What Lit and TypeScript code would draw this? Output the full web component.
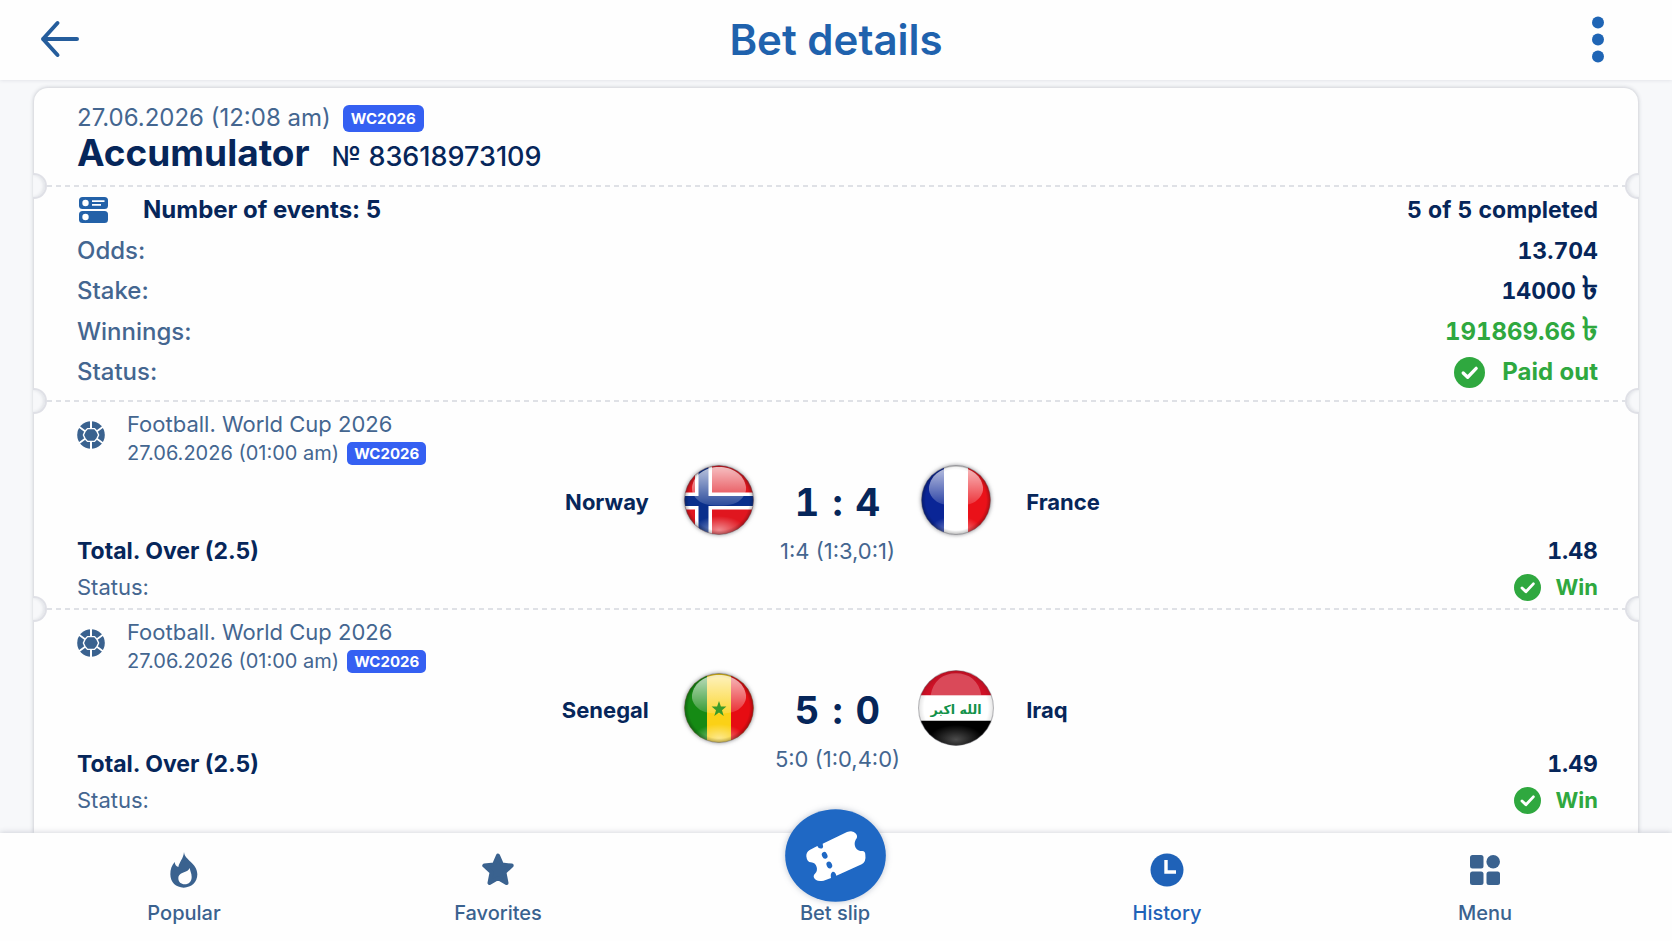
import { LitElement, html, svg, css, nothing, type TemplateResult, type SVGTemplateResult } from "lit";
import { customElement, property } from "lit/decorators.js";

type Country = "norway" | "france" | "senegal" | "iraq";

interface BetEvent {
  league: string;
  date: string;
  home: string;
  homeFlag: Country;
  homeGoals: number;
  away: string;
  awayFlag: Country;
  awayGoals: number;
  periods: string;
  market: string;
  odds: string;
  result: string;
}

const events: BetEvent[] = [
  {
    league: "Football. World Cup 2026", date: "27.06.2026 (01:00 am)",
    home: "Norway", homeFlag: "norway", homeGoals: 1, away: "France", awayFlag: "france", awayGoals: 4,
    periods: "1:4 (1:3,0:1)", market: "Total. Over (2.5)", odds: "1.48", result: "Win",
  },
  {
    league: "Football. World Cup 2026", date: "27.06.2026 (01:00 am)",
    home: "Senegal", homeFlag: "senegal", homeGoals: 5, away: "Iraq", awayFlag: "iraq", awayGoals: 0,
    periods: "5:0 (1:0,4:0)", market: "Total. Over (2.5)", odds: "1.49", result: "Win",
  },
];

const check = html`<svg class="check" viewBox="0 0 32 32" aria-hidden="true">
  <circle cx="16" cy="16" r="16" fill="#2fa83f" />
  <path d="M9.5 16.5l4.6 4.4 8.8-9.2" fill="none" stroke="#fff" stroke-width="3.4" stroke-linecap="round" stroke-linejoin="round" />
</svg>`;

const ball = html`<svg class="ball" viewBox="0 0 28 28" aria-hidden="true">
  <circle cx="14" cy="14" r="13.800" fill="#3a628f" />
  <g fill="none" stroke="#fff" stroke-width="1.400">
    <path d="M10.500 7.600h7l2.400 2.600 1.700 3.800-1.700 3.800-2.400 2.600h-7l-2.400-2.600L6.400 14l1.700-3.800z" />
    <path d="M14 0v7.600M14 20.400V28" stroke-width="2" />
    <path d="M8.100 10.200L2 5.800M8.100 17.800L2 22.200M19.900 10.200L26 5.800M19.900 17.800l6.100 4.400" stroke-width="1.800" />
  </g>
</svg>`;

const flagArt: Record<Country, SVGTemplateResult> = {
  norway: svg`<rect width="72" height="72" fill="#e0161f" />
    <path d="M20.500 0v72M0 37h72" stroke="#fff" stroke-width="17" />
    <path d="M20.500 0v72M0 37h72" stroke="#0a2f8c" stroke-width="10" />`,
  france: svg`<rect width="72" height="72" fill="#fff" />
    <path d="M0 0h24v72H0z" fill="#0a2596" /><path d="M48 0h24v72H48z" fill="#ea1119" />`,
  senegal: svg`<rect width="72" height="72" fill="#fbd116" />
    <path d="M0 0h24v72H0z" fill="#158a14" /><path d="M48 0h24v72H48z" fill="#e60c12" />`,
  iraq: svg`<rect width="72" height="72" fill="#fff" />
    <path d="M0 0h72v24H0z" fill="#cf1126" /><path d="M0 48h72v24H0z" fill="#000" />
    <text x="36" y="42" text-anchor="middle" font-family="DejaVu Sans, Noto Sans, sans-serif" font-weight="700" font-size="12" fill="#12914a">الله اكبر</text>`,
};

@customElement("team-flag")
export class TeamFlag extends LitElement {
  @property() country: Country = "norway";

  static styles = css`
    :host { display: block; }
    .disc { display: block; width: 72px; height: 72px; overflow: visible; filter: drop-shadow(0 0 2px rgba(40, 40, 50, 0.55)); }
    .large { width: 76px; height: 76px; margin: -2px; filter: none; }
  `;

  render() {
    const plain = this.country === "iraq";
    return html`<svg class="disc ${plain ? "large" : ""}" viewBox="0 0 72 72" role="img" aria-label="${this.country}">
      <defs>
        <clipPath id="round"><circle cx="36" cy="36" r=${plain ? 35.5 : 34.5} /></clipPath>
        <linearGradient id="gloss" x1="0" y1="0" x2="0" y2="1">
          <stop offset="0" stop-color="#fff" stop-opacity="0.72" />
          <stop offset="1" stop-color="#fff" stop-opacity="0.14" />
        </linearGradient>
        <radialGradient id="glow" cx="0.5" cy="0.5" r="0.5">
          <stop offset="0" stop-color="#fff" stop-opacity=${plain ? 0.3 : 0.5} />
          <stop offset="1" stop-color="#fff" stop-opacity="0" />
        </radialGradient>
        <radialGradient id="edge" cx="0.5" cy="0.5" r="0.5">
          <stop offset="0.84" stop-color="#000" stop-opacity="0" />
          <stop offset="1" stop-color="#000" stop-opacity=${plain ? 0.12 : 0.36} />
        </radialGradient>
      </defs>
      <g clip-path="url(#round)">
        ${flagArt[this.country]}
        <ellipse cx="36" cy="66" rx="26" ry="14" fill="url(#glow)" />
        <circle cx="36" cy="36" r="36" fill="url(#edge)" />
        ${plain
          ? svg`<path d="M12 24C14 10 24 3 36 3s22 7 24 21z" fill="#fff" opacity="0.24" />`
          : svg`<path d="M9 23C11 10 23 3 36 3s25 7 27 20c1 8-6 15-13 17-9 2-19 2-28 0C15 38 8 31 9 23z" fill="url(#gloss)" />`}
        ${this.country === "senegal"
          ? svg`<path d="M36 29l1.900 5.600h5.500l-4.400 3.600 1.700 5.700-4.700-3.500-4.700 3.500 1.700-5.700-4.400-3.600h5.500z" fill="#3a9a2a" />`
          : nothing}
      </g>
      <circle cx="36" cy="36" r=${plain ? 35.5 : 34.5} fill="none" stroke="#55565c" stroke-opacity="0.4" />
    </svg>`;
  }
}

@customElement("event-section")
export class EventSection extends LitElement {
  @property({ attribute: false }) event!: BetEvent;

  static styles = css`
    :host { display: block; }
    .event { box-sizing: border-box; display: grid; grid-template-columns: minmax(0, 1fr) auto minmax(0, 1fr); height: 100%; padding: 8px 40px 3px 43px; }
    .side { display: flex; flex-direction: column; justify-content: space-between; }
    .right { justify-content: flex-end; align-items: flex-end; }
    .head { display: flex; align-items: flex-start; gap: 22px; }
    .ball { width: 28px; height: 28px; flex: none; margin-top: 11px; }
    .league { font-size: 22px; line-height: 28px; color: #446690; }
    .date { display: flex; align-items: center; gap: 8px; font-size: 20px; line-height: 30px; color: #446690; white-space: nowrap; }
    .badge { padding: 0 7px; border-radius: 5px; background: #3560f2; color: #fff; font-size: 15px; line-height: 23px; font-weight: 700; }
    .strong { font-size: 23px; line-height: 36px; font-weight: 700; color: #06265a; }
    .odds { font-variant-numeric: tabular-nums; }
    .label { font-size: 22px; line-height: 36px; color: #446690; }
    .won { display: flex; align-items: center; gap: 15px; font-size: 22px; line-height: 36px; font-weight: 700; color: #2fa83f; }
    .check { width: 27px; height: 27px; }
    .match { display: grid; grid-template-columns: 1fr auto auto auto 1fr; align-items: center; align-content: start; column-gap: 34px; padding-top: 54px; }
    .team { padding-top: 4px; font-size: 22px; font-weight: 700; color: #06265a; line-height: 68px; }
    .home { text-align: right; }
    .score { display: flex; gap: 13px; padding: 4px 6px 0; font-size: 38px; line-height: 68px; font-weight: 700; font-variant-numeric: tabular-nums; color: #06265a; }
    .periods { grid-column: 1 / -1; text-align: center; font-size: 22px; line-height: 30px; color: #446690; }
  `;

  render() {
    const e = this.event;
    return html`<article class="event">
      <div class="side">
        <div class="head">
          ${ball}
          <div>
            <div class="league">${e.league}</div>
            <div class="date">${e.date} <span class="badge">WC2026</span></div>
          </div>
        </div>
        <div>
          <div class="strong">${e.market}</div>
          <div class="label">Status:</div>
        </div>
      </div>
      <div class="match">
        <span class="team home">${e.home}</span>
        <team-flag country=${e.homeFlag}></team-flag>
        <span class="score"><span>${e.homeGoals}</span> <span>:</span> <span>${e.awayGoals}</span></span>
        <team-flag country=${e.awayFlag}></team-flag>
        <span class="team">${e.away}</span>
        <span class="periods">${e.periods}</span>
      </div>
      <div class="side right">
        <div class="strong odds">${e.odds}</div>
        <div class="won">${check}${e.result}</div>
      </div>
    </article>`;
  }
}

interface Tab { label: string; icon: TemplateResult; active?: boolean; raised?: boolean; }

const tabs: Tab[] = [
  {
    label: "Popular",
    icon: html`<svg class="icon" viewBox="80 45 108 108" aria-hidden="true"><path fill="currentColor" fill-rule="evenodd" d="M134 45C136 70 174 78 174 112C174 136 156 152 133 152C110 152 93 136 93 112C93 97 97 85 106 75C107 83 110 88 117 90C120 74 132 66 134 45ZM151 93C148 100 142 103 134 106C124 109 117 114 117 124C117 135 125 142 136 142C149 142 157 133 157 120C157 108 152 102 151 93Z" /></svg>`,
  },
  {
    label: "Favorites",
    icon: html`<svg class="icon" viewBox="0 0 36 36" aria-hidden="true"><path fill="currentColor" stroke="currentColor" stroke-width="4" stroke-linejoin="round" d="M18 3.500l3.900 9 9.800 1.100-7.300 6.600 2.100 10.800L18 26l-8.500 5 2.100-10.800-7.300-6.600 9.800-1.100z" /></svg>`,
  },
  {
    label: "Bet slip", raised: true,
    icon: html`<svg class="slip" viewBox="36 36 303 279" aria-hidden="true">
      <ellipse cx="187.500" cy="175.500" rx="151" ry="139" fill="#1f68c4" />
      <path fill="#fff" d="M100 178Q99 166 110 159L133 147Q137 157 148 154Q152 150 149 140L222 105Q240 98 249 110Q256 119 248 128Q242 140 248 152Q254 162 268 162Q277 162 277 174Q280 194 266 202L190 236Q187 223 179 224Q171 228 174 243L152 251Q128 256 122 240Q121 234 127 229Q134 221 131 210Q127 197 114 196Q102 196 100 178Z" />
      <g fill="#1f68c4"><ellipse cx="155" cy="175" rx="8" ry="10.500" transform="rotate(-26 155 175)" /><ellipse cx="169" cy="204" rx="8" ry="10.500" transform="rotate(-26 169 204)" /></g>
    </svg>`,
  },
  {
    label: "History", active: true,
    icon: html`<svg class="icon" viewBox="0 0 36 36" aria-hidden="true"><circle cx="18" cy="18" r="16.500" fill="currentColor" /><path d="M17 8v12h10" fill="none" stroke="#fff" stroke-width="3.400" /></svg>`,
  },
  {
    label: "Menu",
    icon: html`<svg class="icon" viewBox="0 0 36 36" aria-hidden="true"><g fill="currentColor"><rect x="3" y="3" width="13.500" height="13.500" rx="2.500" /><circle cx="26.200" cy="9.800" r="6.800" /><rect x="3" y="19.500" width="13.500" height="13.500" rx="2.500" /><rect x="19.500" y="19.500" width="13.500" height="13.500" rx="2.500" /></g></svg>`,
  },
];

@customElement("app-root")
export class AppRoot extends LitElement {
  static styles = css`
    :host { display: flex; flex-direction: column; height: 100vh; overflow: hidden; background: #f7f8fa; font-family: Inter, "Noto Sans", sans-serif; color: #06265a; }
    .topbar { position: relative; flex: none; box-sizing: border-box; height: 80px; display: grid; grid-template-columns: 1fr auto 1fr; align-items: center; padding: 0 36px; background: #fefefe; box-shadow: 0 0 4px rgba(40, 50, 80, 0.14); }
    .tool { display: block; padding: 0; border: 0; background: none; cursor: pointer; }
    .back { width: 44px; height: 44px; }
    .more { justify-self: end; width: 22px; height: 48px; margin-right: 27px; }
    .tool svg { display: block; width: 100%; height: 100%; }
    .heading { margin: 0; font-size: 42px; line-height: 48px; font-weight: 600; color: #1f62ad; }
    .content { flex: 1; min-height: 0; overflow: hidden; display: flex; flex-direction: column; padding: 8px 34px 0; }
    .card { flex: 1 0 auto; background: #fefefe; border-radius: 14px 14px 0 0; box-shadow: 0 0 4px rgba(50, 55, 75, 0.3); }
    .intro { padding: 16px 40px 11px 43px; }
    .when { display: flex; align-items: center; gap: 12px; font-size: 24px; line-height: 28px; color: #446690; }
    .badge { padding: 0 8px; border-radius: 6px; background: #3560f2; color: #fff; font-size: 15px; line-height: 27px; font-weight: 700; }
    .kind { display: flex; align-items: baseline; gap: 22px; margin: 0; line-height: 42px; font-size: 37px; font-weight: 700; }
    .number { font-size: 27px; line-height: 30px; font-weight: 500; }
    .tear { position: relative; height: 2px; margin: 0 13px; background: repeating-linear-gradient(90deg, #dfe1e6 0 5px, transparent 5px 9px); }
    .tear::before, .tear::after { content: ""; position: absolute; top: -12px; box-sizing: border-box; width: 14px; height: 26px; background: #f7f8fa; border: 2px solid #dfe0e6; }
    .tear::before { left: -14px; border-left: 0; border-radius: 0 13px 13px 0; box-shadow: inset -2px 0 3px rgba(60, 65, 85, 0.1); }
    .tear::after { right: -14px; border-right: 0; border-radius: 13px 0 0 13px; box-shadow: inset 2px 0 3px rgba(60, 65, 85, 0.1); }
    .summary { box-sizing: border-box; height: 213px; display: flex; flex-direction: column; justify-content: space-between; margin: 0; padding: 3px 40px 8px 43px; }
    .row { display: flex; justify-content: space-between; align-items: center; font-size: 24px; line-height: 40px; }
    .name { font-weight: 500; color: #446690; }
    .lead { display: flex; align-items: center; gap: 34px; color: #06265a; font-weight: 700; }
    .stack { width: 32px; height: 28px; }
    .value { margin: 0; font-size: 23px; font-weight: 700; font-variant-numeric: tabular-nums; }
    .sign { font-size: 32px; line-height: 28px; }
    .won { font-size: 24px; color: #2fa83f; }
    .paid { display: flex; align-items: center; gap: 17px; }
    .check { width: 31px; height: 31px; }
    .event { height: 206px; }
    .tear + .last { height: 211px; }
    .nav { position: relative; flex: none; box-sizing: border-box; height: 108px; display: grid; grid-template-columns: 320fr 308fr 366fr 298fr 338fr; grid-template-rows: minmax(0, 1fr); padding: 0 18px 14px 24px; background: #fefefe; box-shadow: 0 0 6px rgba(40, 50, 80, 0.24); }
    .tab { display: flex; flex-direction: column; align-items: center; justify-content: flex-end; gap: 11px; color: #3a628f; text-decoration: none; font-size: 20px; line-height: 28px; font-weight: 500; }
    .active { color: #1f62b8; }
    .raised { gap: 0; }
    .icon { display: block; flex: none; width: 36px; height: 36px; }
    .slip { display: block; flex: none; width: 101px; height: 93px; margin-bottom: -3px; filter: drop-shadow(0 0 3px rgba(40, 60, 100, 0.3)); }
  `;

  render() {
    return html`
      <header class="topbar">
        <button class="tool back" aria-label="Back">
          <svg viewBox="0 0 44 44"><path d="M41 21H7M21.500 5L7 21l14.500 16" fill="none" stroke="#255d9c" stroke-width="4" stroke-linecap="round" stroke-linejoin="round" /></svg>
        </button>
        <h1 class="heading">Bet details</h1>
        <button class="tool more" aria-label="More options">
          <svg viewBox="0 0 22 48"><g fill="#1f65b5"><circle cx="11" cy="6.500" r="6" /><circle cx="11" cy="23.500" r="6" /><circle cx="11" cy="40.500" r="6" /></g></svg>
        </button>
      </header>
      <main class="content">
        <div class="card">
          <div class="intro">
            <div class="when">27.06.2026 (12:08 am) <span class="badge">WC2026</span></div>
            <h2 class="kind">Accumulator <span class="number">№ 83618973109</span></h2>
          </div>
          <div class="tear"></div>
          <dl class="summary">
            <div class="row">
              <dt class="name lead">
                <svg class="stack" viewBox="0 0 32 28" aria-hidden="true">
                  <rect x="2" y="1" width="29" height="12" rx="3.500" fill="#2361a8" /><rect x="2" y="15" width="29" height="12" rx="3.500" fill="#2361a8" />
                  <circle cx="8.500" cy="7" r="3.200" fill="#fff" /><circle cx="8.500" cy="21" r="3.200" fill="#fff" />
                  <path d="M15 5.200h12.500M15 8.800h9" stroke="#fff" stroke-width="1.800" />
                </svg>
                Number of events: 5
              </dt>
              <dd class="value">5 of 5 completed</dd>
            </div>
            <div class="row"><dt class="name">Odds:</dt><dd class="value">13.704</dd></div>
            <div class="row"><dt class="name">Stake:</dt><dd class="value">14000 <span class="sign">৳</span></dd></div>
            <div class="row"><dt class="name">Winnings:</dt><dd class="value won">191869.66 <span class="sign">৳</span></dd></div>
            <div class="row"><dt class="name">Status:</dt><dd class="value won paid">${check}Paid out</dd></div>
          </dl>
          ${events.map((event, i) => html`
            <div class="tear"></div>
            <event-section class="event ${i === events.length - 1 ? "last" : ""}" .event=${event}></event-section>
          `)}
        </div>
      </main>
      <nav class="nav">
        ${tabs.map((tab) => html`
          <a class="tab ${tab.active ? "active" : ""} ${tab.raised ? "raised" : ""}" href="#" aria-current=${tab.active ? "page" : nothing}>
            ${tab.icon}<span>${tab.label}</span>
          </a>`)}
      </nav>
    `;
  }
}
